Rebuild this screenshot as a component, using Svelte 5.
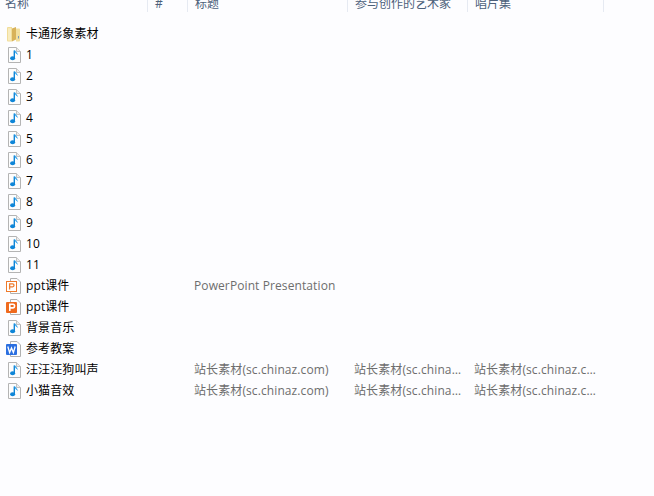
<script>
  const names = ['1','2','3','4','5','6','7','8','9','10','11'];
  const src = '站长素材(sc.chinaz.com)';
  const rows = [
    { name: '卡通形象素材', icon: 'folder' },
    ...names.map((name) => ({ name, icon: 'audio' })),
    { name: 'ppt课件', icon: 'pptx', title: 'PowerPoint Presentation' },
    { name: 'ppt课件', icon: 'ppt' },
    { name: '背景音乐', icon: 'audio' },
    { name: '参考教案', icon: 'word' },
    { name: '汪汪汪狗叫声', icon: 'audio', title: src, artist: src, album: src },
    { name: '小猫音效', icon: 'audio', title: src, artist: src, album: src }
  ];
</script>

<div class="page">
  <div class="head">
    <div class="hc c-name">名称</div>
    <div class="hc c-num">#</div>
    <div class="hc c-title">标题</div>
    <div class="hc c-artist">参与创作的艺术家</div>
    <div class="hc c-album">唱片集</div>
  </div>
  <div class="list">
    {#each rows as r}
      <div class="row">
        <div class="c-name namecell">
          <svg class="icon" width="16" height="16" viewBox="0 0 16 16">
            {#if r.icon === 'folder'}
              <path d="M2 2 Q2 1 3 1 H7 V15.5 H3 Q2 15.5 2 14.5 Z" fill="#f1dd9a" />
              <path d="M11 2.5 H14.2 Q15 2.5 15 3.3 V14.5 Q15 15.5 14 15.5 H11 Z" fill="#f2df9f" />
              <path d="M7 2.5 L11 1 V13.5 L7 15.5 Z" fill="#d8b25a" />
              <path d="M3 2.2 H6 V14.5 H3 Z" fill="#f8ecc0" />
              <rect x="13" y="10" width="1" height="2.5" fill="#7a9cba" />
            {:else if r.icon === 'audio'}
              <path d="M3.5 .5 H11.5 L15.5 4.5 V15.5 H3.5 Z" fill="#fdfdfd" stroke="#b4b4b4" />
              <path d="M11.5 .5 V4.5 H15.5" fill="#ececec" stroke="#c2c2c2" />
              <path d="M9.3 3.5 V11" stroke="#0f86d8" stroke-width="1.4" fill="none" />
              <path d="M9.6 3.5 Q10 6 12.5 7.4 Q11.6 5.2 9.9 3.5" fill="#3aa5ea" stroke="#3aa5ea" stroke-width=".6" />
              <ellipse cx="7.6" cy="11.2" rx="2.5" ry="2" fill="#0f86d8" />
            {:else if r.icon === 'pptx'}
              <path d="M5.5 .5 H12 L15.5 4 V15.5 H5.5 Z" fill="#fdfdfd" stroke="#b0b0b0" />
              <rect x="1.5" y="3.5" width="10" height="10" fill="#fff" stroke="#ee7a2c" />
              <path d="M4.6 11.5 V5.8 H7.6 Q9 5.8 9 7.3 T7.6 8.9 H4.6" fill="none" stroke="#ee7a2c" stroke-width="1.3" />
            {:else if r.icon === 'ppt'}
              <path d="M5.5 .5 H12 L15.5 4 V15.5 H5.5 Z" fill="#fdfdfd" stroke="#b0b0b0" />
              <rect x="1" y="3" width="11" height="11" rx="1" fill="#ef6a1e" />
              <path d="M4.8 12 V5.2 H8 Q9.6 5.2 9.6 7 T8 8.9 H4.8" fill="none" stroke="#fff" stroke-width="1.6" />
            {:else}
              <path d="M5.5 .5 H12 L15.5 4 V15.5 H5.5 Z" fill="#fdfdfd" stroke="#b0b0b0" />
              <rect x="1" y="3" width="11" height="11" rx="1" fill="#2b6fe0" />
              <path d="M2.8 5.5 L4.6 11.5 L6.5 7 L8.4 11.5 L10.2 5.5" fill="none" stroke="#fff" stroke-width="1.3" />
            {/if}
          </svg>
          <span class="nm">{r.name}</span>
        </div>
        <div class="c-num"></div>
        <div class="c-title cell">{r.title ?? ''}</div>
        <div class="c-artist cell">{r.artist ?? ''}</div>
        <div class="c-album cell">{r.album ?? ''}</div>
      </div>
    {/each}
  </div>
</div>

<style>
  :global(body) {
    margin: 0;
    background: #fdfdff;
  }
  .page {
    width: 654px;
    height: 496px;
    overflow: hidden;
    font: 12px/21px "Open Sans", "Noto Sans CJK SC", sans-serif;
    letter-spacing: 0.1px;
    color: #000;
  }
  .head {
    display: flex;
    height: 12px;
    margin-top: -6px;
    padding-bottom: 17px;
    color: #4c607a;
    letter-spacing: 0;
  }
  .hc {
    height: 18px;
    line-height: 19px;
    box-sizing: border-box;
    padding-left: 7px;
    border-right: 1px solid #e6eaf2;
    white-space: nowrap;
    overflow: hidden;
  }
  .head .c-name { padding-left: 5px; }
  .row {
    display: flex;
    height: 21px;
  }
  .c-name { width: 148px; flex: none; box-sizing: border-box; }
  .c-num { width: 40px; flex: none; box-sizing: border-box; }
  .c-title { width: 160px; flex: none; box-sizing: border-box; }
  .c-artist { width: 120px; flex: none; box-sizing: border-box; }
  .c-album { width: 136px; flex: none; box-sizing: border-box; }
  .namecell {
    display: flex;
    align-items: center;
    padding-left: 5px;
    gap: 5px;
  }
  .icon { flex: none; }
  .cell {
    padding: 0 6px;
    color: #6d6d6d;
    white-space: nowrap;
    overflow: hidden;
    text-overflow: ellipsis;
  }
</style>
